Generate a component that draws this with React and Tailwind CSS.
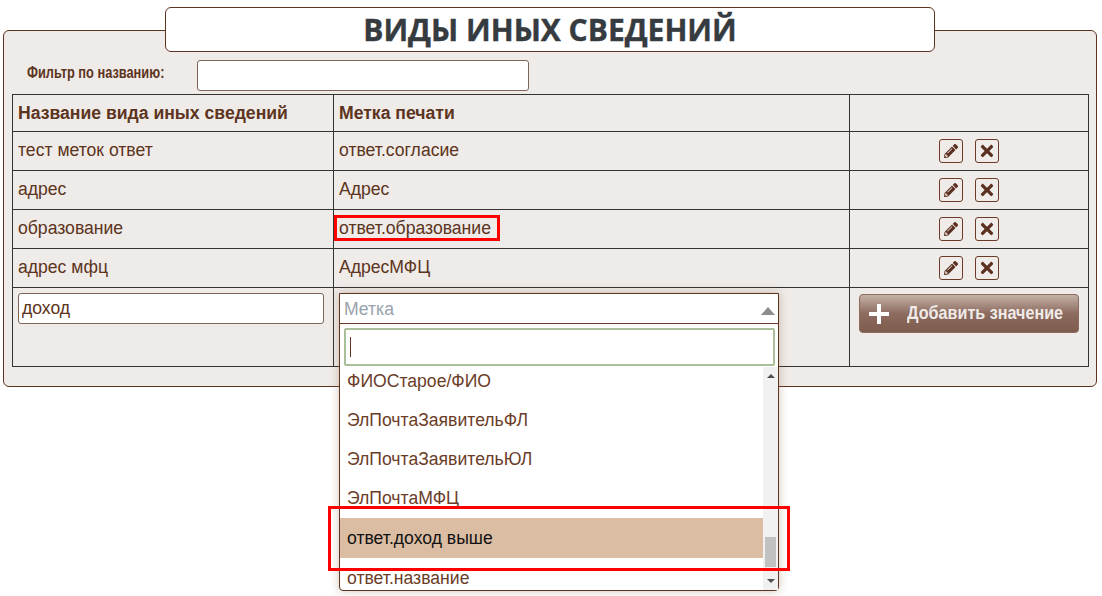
import React from "react";
import { FaPencilAlt, FaTimes } from "react-icons/fa";

const rows = [
  { name: "тест меток ответ", label: "ответ.согласие" },
  { name: "адрес", label: "Адрес" },
  { name: "образование", label: "ответ.образование", marked: true },
  { name: "адрес мфц", label: "АдресМФЦ" },
];

const options = ["ФИОСтарое/ФИО", "ЭлПочтаЗаявительФЛ", "ЭлПочтаЗаявительЮЛ", "ЭлПочтаМФЦ", "ответ.доход выше", "ответ.название"];

function IconButton({ children }) {
  return (
    <button className="w-[24px] h-[24px] flex items-center justify-center bg-[#efebe8] border border-[#6b3a28] rounded-[3px] text-[#5c3020]">
      {children}
    </button>
  );
}

function Dropdown() {
  return (
    <div className="absolute left-[5px] top-[5px] w-[440px] h-[298px] z-10 bg-white border border-[#5c3420] rounded-b-[4px] shadow-[0_0_10px_rgba(130,80,40,0.35)] flex flex-col">
      {/* Selected value */}
      <div className="h-[30px] shrink-0 flex items-center justify-between pl-[4px] pr-[3px] pt-[1px] border-b border-[#6b3a28] text-[#99a3ad] text-[17.6px]">
        <span>Метка</span>
        <span className="mt-[4px] w-0 h-0 border-x-[7px] border-x-transparent border-b-[8px] border-b-[#8c8c8c]" />
      </div>

      {/* Search */}
      <div className="pl-[4px] pr-[3px] pt-[4px] pb-[1px] shrink-0 bg-white">
        <div className="h-[38px] bg-white border-2 border-[#a9bf9a] rounded-[2px] flex items-center pl-[4px]">
          <span className="w-px h-[20px] bg-[#5c3420]" />
        </div>
      </div>

      {/* Options list */}
      <div className="relative flex-1 overflow-hidden">
        <div className="-mt-[6px] pr-[15px]">
          {options.map((o) =>
            o === "ответ.доход выше" ? (
              <div key={o} className="h-[40px] flex items-center pl-[7px] text-[17.6px] bg-[#dbbda3] text-[#111]">
                {o}
              </div>
            ) : (
              <div key={o} className="h-[39.2px] flex items-center pl-[7px] pt-[1px] text-[17.6px] text-[#6b3d28]">
                {o}
              </div>
            )
          )}
        </div>

        {/* Scrollbar */}
        <div className="absolute right-0 top-0 bottom-0 w-[15px] bg-[#f1f1f1] flex flex-col items-center justify-between py-[7px]">
          <span className="w-0 h-0 border-x-[4px] border-x-transparent border-b-[4px] border-b-[#505050]" />
          <span className="absolute left-[2px] right-[2px] top-[170px] h-[30px] bg-[#c1c1c1]" />
          <span className="w-0 h-0 border-x-[4px] border-x-transparent border-t-[4px] border-t-[#505050]" />
        </div>
      </div>
    </div>
  );
}

export default function App() {
  return (
    <div className="relative w-[1102px] h-[596px] bg-white overflow-hidden pt-[7px] px-[3px] font-['Liberation_Sans',Arial,sans-serif] text-[#5c3420]">
      {/* Title */}
      <div className="relative z-[1] ml-[162px] w-[770px] h-[45px] bg-white border border-[#5c3420] rounded-[6px] flex items-center justify-center">
        <h1 className="font-['Open_Sans',sans-serif] font-bold text-[30px] text-[#363b40] leading-none [-webkit-text-stroke:0.4px_#363b40]">
          ВИДЫ ИНЫХ СВЕДЕНИЙ
        </h1>
      </div>

      {/* Panel */}
      <div className="-mt-[22px] w-[1094px] h-[357px] bg-[#efebe8] border border-[#5c3420] rounded-[6px] pt-[28px] pl-[8px]">
        <div className="flex items-center h-[32px] mb-[3px]">
          <div className="ml-[15px] w-[170px] -mt-[5px]">
            <label className="inline-block origin-left scale-x-[0.8] whitespace-nowrap font-bold text-[16px] text-[#5c3420]">
              Фильтр по названию:
            </label>
          </div>
          <input className="w-[332px] h-[31px] bg-white border border-[#7d6558] rounded-[3px] outline-none" />
        </div>

        <table className="w-[1076px] table-fixed border-collapse text-[#5c3420]">
          <colgroup>
            <col className="w-[321px]" />
            <col className="w-[516px]" />
            <col className="w-[239px]" />
          </colgroup>
          <thead>
            <tr className="h-[37px] text-left text-[17.6px]">
              <th className="border border-[#333] px-[5px] pt-[1px] font-bold">Название вида иных сведений</th>
              <th className="border border-[#333] px-[5px] pt-[1px] font-bold">Метка печати</th>
              <th className="border border-[#333]"></th>
            </tr>
          </thead>
          <tbody>
            {rows.map((r) => (
              <tr key={r.name} className="h-[39px] text-[17.6px]">
                <td className="border border-[#333] px-[5px] pb-[2px]">{r.name}</td>
                <td className="border border-[#333] px-[5px] pb-[2px]">
                  <span className="relative">
                    {r.label}
                    {r.marked && (
                      <span className="absolute -left-[5px] -right-[9px] -top-[3px] -bottom-[3px] border-[3px] border-[#f00]" />
                    )}
                  </span>
                </td>
                <td className="border border-[#333]">
                  <div className="flex justify-center gap-[12px] pr-[1px]">
                    <IconButton>
                      <FaPencilAlt className="text-[14px]" />
                    </IconButton>
                    <IconButton>
                      <FaTimes className="text-[18px]" />
                    </IconButton>
                  </div>
                </td>
              </tr>
            ))}
            <tr className="h-[79px] text-[17.6px] align-top">
              <td className="border border-[#333] px-[5px] pt-[5px]">
                <input
                  readOnly
                  value="доход"
                  className="w-[306px] h-[31px] px-[3px] bg-white border border-[#7d6558] rounded-[3px] outline-none text-[#5c3420]"
                />
              </td>
              <td className="relative border border-[#333]">
                <Dropdown />
              </td>
              <td className="border border-[#333] pt-[6px] pl-[9px]">
                <button className="w-[220px] h-[39px] rounded-[4px] border border-[#8a6b5e] bg-gradient-to-b from-[#c4b1a8] via-[#8d6c5f] to-[#7d5c4e] flex items-center text-[#f0ebe9]">
                  <svg viewBox="0 0 20 20" className="w-[20px] h-[20px] ml-[9px] mr-[18px] shrink-0" fill="#fff">
                    <path d="M8 0h4v8h8v4h-8v8H8v-8H0V8h8z" />
                  </svg>
                  <span className="inline-block origin-left scale-x-[0.85] whitespace-nowrap font-bold text-[19px]">
                    Добавить значение
                  </span>
                </button>
              </td>
            </tr>
          </tbody>
        </table>
      </div>

      {/* Annotation over the open list */}
      <div className="absolute left-[328px] top-[506px] w-[462px] h-[65px] z-20 border-[3px] border-[#f00]" />
    </div>
  );
}
